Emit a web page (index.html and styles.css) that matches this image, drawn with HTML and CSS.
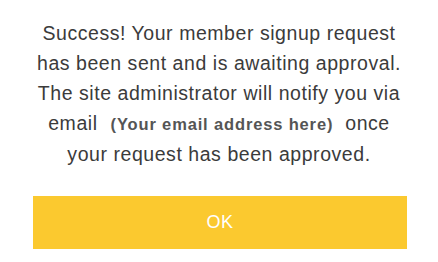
FILE: index.html
```html
<!DOCTYPE html>
<html>
<head>
<meta charset="utf-8">
<link rel="stylesheet" href="styles.css">
</head>
<body>
<div class="dialog">
  <p class="message">Success! Your member signup request<br>has been sent and is awaiting approval.<br>The site administrator will notify you via<br>email<span class="email">(Your email address here)</span>once<br>your request has been approved.</p>
  <button class="ok">OK</button>
</div>
</body>
</html>
```
FILE: styles.css
```css
html, body {
  margin: 0;
  padding: 0;
  background: #ffffff;
}
.dialog {
  display: flex;
  flex-direction: column;
  align-items: center;
  padding-top: 18px;
}
.message {
  margin: 0;
  font-family: "Liberation Sans", Arial, sans-serif;
  font-size: 19.5px;
  letter-spacing: 0.55px;
  line-height: 30px;
  color: #3b3b3b;
  text-align: center;
}
.email {
  font-weight: bold;
  font-size: 16.5px;
  letter-spacing: 0.85px;
  color: #555555;
  margin: 0 12px 0 13px;
}
.ok {
  margin-top: 27px;
  margin-left: 2px;
  width: 374px;
  height: 53px;
  border: none;
  background: #fbc92f;
  color: #ffffff;
  font-family: "Liberation Sans", Arial, sans-serif;
  font-size: 18px;
  letter-spacing: 0.5px;
  padding: 0;
}
```
